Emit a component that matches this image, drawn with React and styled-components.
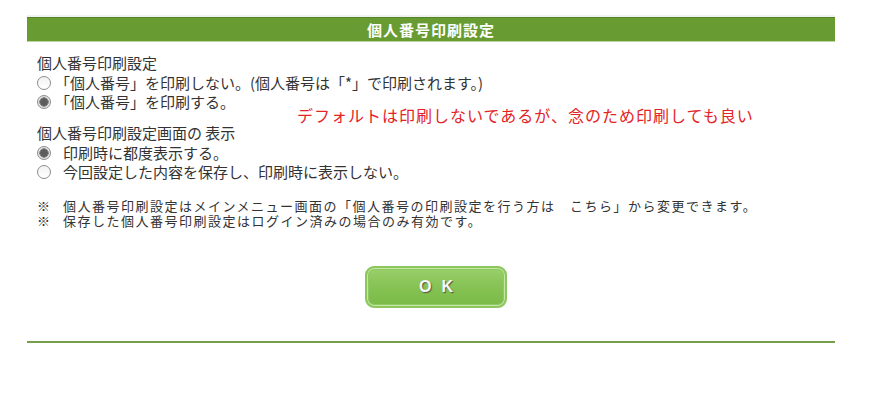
import React from 'react';
import styled, { createGlobalStyle } from 'styled-components';

const GREEN = '#689b31';

const GlobalStyle = createGlobalStyle`
  body {
    margin: 0;
    background: #ffffff;
    font-family: "Noto Sans CJK JP", "Noto Sans", sans-serif;
    color: #333333;
  }
`;

const Page = styled.div`
  position: relative;
  width: 808px;
  margin-left: 27px;
  padding-top: 15px;
`;

const TitleBar = styled.div`
  height: 24px;
  border-top: 2px solid #f0f2ee;
  border-bottom: 1px solid #b9d49c;
  background: ${GREEN};
  box-shadow: inset 0 1px 0 #55852a;
  display: flex;
  align-items: center;
  justify-content: center;
  color: #ffffff;
  font-size: 15px;
  font-weight: 700;
  letter-spacing: 1px;
  line-height: 1;
`;

const Body = styled.div`
  padding-left: 10px;
  padding-top: 11px;
`;

const Section = styled.div`
  margin-top: ${(p) => p.$gap || 0}px;
`;

const Label = styled.div`
  font-size: 15px;
  line-height: 20px;
  height: 20px;
`;

const Row = styled.div`
  display: flex;
  align-items: center;
  height: 19px;
  font-size: 15px;
  line-height: 19px;
  gap: ${(p) => p.$gap}px;
  white-space: nowrap;
`;

const Radio = styled.span`
  box-sizing: border-box;
  flex: none;
  width: 14px;
  height: 14px;
  border-radius: 50%;
  border: 1px solid #8c8c8c;
  background: ${(p) =>
    p.$checked
      ? 'radial-gradient(circle, #5c5c5c 0 3.5px, #8a8a8a 4px 4.5px, #e4e4e4 5px)'
      : 'linear-gradient(#f2f2f2, #ffffff)'};
`;

const Notes = styled.div`
  margin-top: 17px;
  font-size: 13px;
  line-height: 15px;
  letter-spacing: 1.5px;
`;

const Note = styled.div`
  display: flex;
  white-space: nowrap;
`;

const Mark = styled.span`
  flex: none;
  width: 26px;
  letter-spacing: 0;
`;

const ButtonRow = styled.div`
  display: flex;
  justify-content: center;
  margin-top: 38px;
`;

const OkButton = styled.button`
  box-sizing: border-box;
  width: 142px;
  height: 42px;
  border-radius: 9px;
  border: 2px solid #8cc65c;
  background: linear-gradient(#9ad06b, #84c152 55%, #7aba47);
  box-shadow: inset 0 0 0 1px #c4e6a6, inset 0 0 0 2px #8fc961;
  color: #f7f7f7;
  font-family: "Liberation Sans", Arial, sans-serif;
  font-size: 16px;
  font-weight: 700;
  letter-spacing: 10px;
  padding: 0 0 0 10px;
  text-shadow: 1px 1px 1px #4c5a44;
  cursor: pointer;
`;

const BottomRule = styled.div`
  margin-top: 33px;
  height: 0;
  border-top: 2px solid #74a04c;
`;

const Annotation = styled.div`
  position: absolute;
  left: 270px;
  top: 105px;
  color: #e32326;
  font-size: 16px;
  line-height: 20px;
  letter-spacing: 1px;
  white-space: nowrap;
`;

const App = () => (
  <>
    <GlobalStyle />
    <Page>
      <TitleBar>個人番号印刷設定</TitleBar>
      <Body>
        <Section>
          <Label>個人番号印刷設定</Label>
          <Row $gap={4}>
            <Radio />
            <span>「個人番号」を印刷しない。(個人番号は「*」で印刷されます。)</span>
          </Row>
          <Row $gap={4}>
            <Radio $checked />
            <span>「個人番号」を印刷する。</span>
          </Row>
        </Section>

        <Section $gap={12}>
          <Label>個人番号印刷設定画面の 表示</Label>
          <Row $gap={12}>
            <Radio $checked />
            <span>印刷時に都度表示する。</span>
          </Row>
          <Row $gap={12}>
            <Radio />
            <span>今回設定した内容を保存し、印刷時に表示しない。</span>
          </Row>
        </Section>

        <Notes>
          <Note>
            <Mark>※</Mark>
            <span>個人番号印刷設定はメインメニュー画面の「個人番号の印刷設定を行う方は　こちら」から変更できます。</span>
          </Note>
          <Note>
            <Mark>※</Mark>
            <span>保存した個人番号印刷設定はログイン済みの場合のみ有効です。</span>
          </Note>
        </Notes>

        <ButtonRow>
          <OkButton>OK</OkButton>
        </ButtonRow>
      </Body>
      <BottomRule />
      <Annotation>デフォルトは印刷しないであるが、念のため印刷しても良い</Annotation>
    </Page>
  </>
);

export default App;
